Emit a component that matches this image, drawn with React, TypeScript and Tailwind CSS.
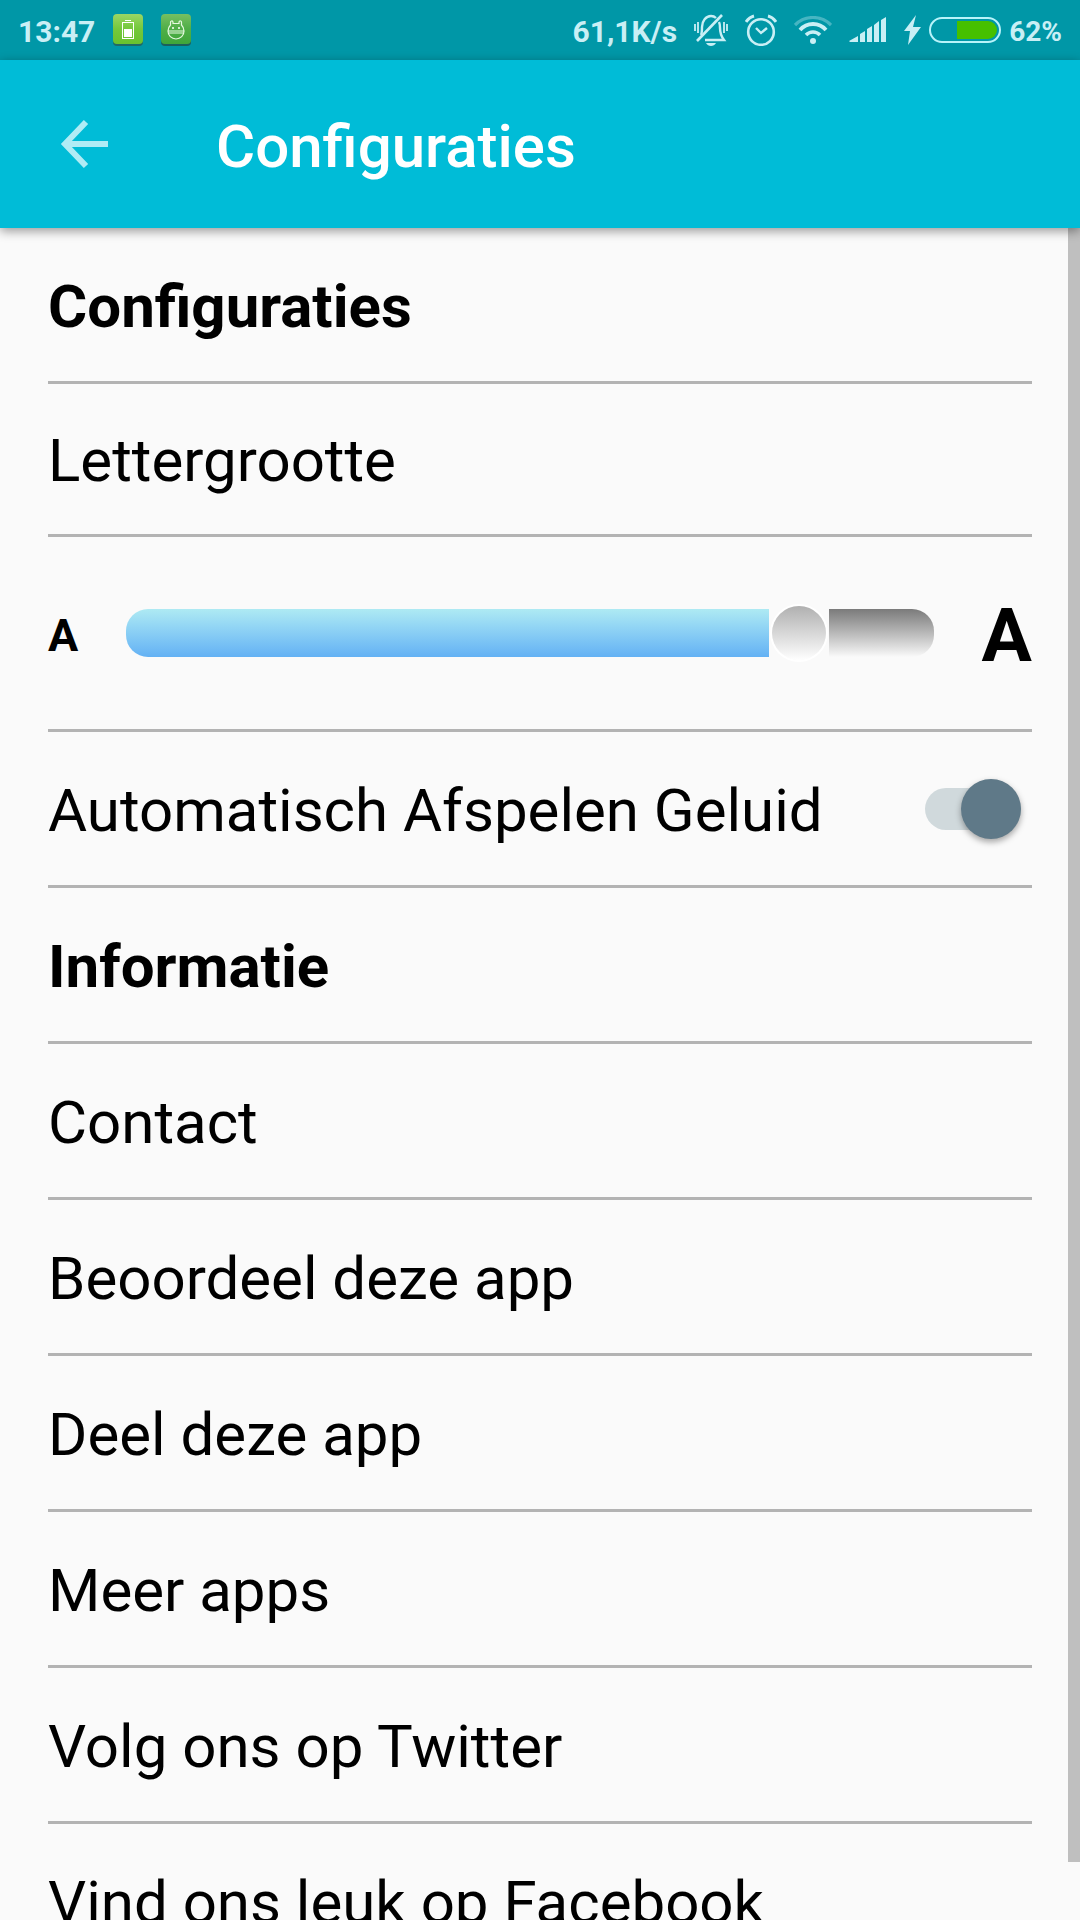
import React, { useState } from "react";

const links = [
  "Contact",
  "Beoordeel deze app",
  "Deel deze app",
  "Meer apps",
  "Volg ons op Twitter",
  "Vind ons leuk op Facebook",
];

const BatteryAppIcon = () => (
  <svg width="30" height="32" viewBox="0 0 30 32" aria-hidden="true">
    <defs>
      <linearGradient id="lime" x1="0" y1="0" x2="0" y2="1">
        <stop offset="0" stopColor="#9ad665" />
        <stop offset="0.5" stopColor="#74c83c" />
        <stop offset="1" stopColor="#68c22f" />
      </linearGradient>
    </defs>
    <rect y="2" width="30" height="30" rx="4" fill="#1f6a66" />
    <rect width="30" height="30" rx="4" fill="url(#lime)" />
    <rect x="9.5" y="8.5" width="11" height="16" fill="none" stroke="#fff" />
    <path d="M12 6.5h6" stroke="#fff" />
    <rect x="11" y="15" width="8" height="8" fill="#fff" />
  </svg>
);

const AndroidAppIcon = () => (
  <svg width="30" height="32" viewBox="0 0 30 32" aria-hidden="true">
    <defs>
      <linearGradient id="green" x1="0" y1="0" x2="0" y2="1">
        <stop offset="0" stopColor="#76bf62" />
        <stop offset="0.5" stopColor="#4fae47" />
        <stop offset="1" stopColor="#3fa63a" />
      </linearGradient>
    </defs>
    <rect y="2" width="30" height="30" rx="4" fill="#1b5f5c" />
    <rect width="30" height="30" rx="4" fill="url(#green)" />
    <path
      d="M12 9.5h6M9.5 11.5v-3a1 1 0 0 1 2.500-.5v2M20.500 11.500v-3a1 1 0 0 0-2.500-.5v2M9.500 11C7.500 13 7 15 7 17c0 4.500 3.500 8 8 8s8-3.500 8-8c0-2-.5-4-2.500-6M7 17h16M8 19h14"
      fill="none"
      stroke="#e6f9e0"
      strokeWidth="1.2"
    />
    <circle cx="12" cy="14" r="1" fill="#fff" />
    <circle cx="18" cy="14" r="1" fill="#fff" />
  </svg>
);

const MutedBellIcon = () => (
  <svg width="34" height="32" viewBox="0 0 34 32" fill="none" stroke="currentColor" aria-hidden="true">
    <path d="M7 21c1-2 1-5 1-8C8 7 12 2 17 2c2 0 4 1 5 2M25 8c1 2 1 4 1 6 0 5 1 8 4 12H11" strokeWidth="2.4" />
    <path d="M28 1L3 27" strokeWidth="2.6" />
    <path d="M1 10v7M4 8v11M30 8v11M33 10v7" strokeWidth="1.8" />
    <path d="M12 29h10c-1 2-3 3-5 3s-4-1-5-3z" fill="currentColor" stroke="none" />
  </svg>
);

const AlarmIcon = () => (
  <svg width="32" height="32" viewBox="0 0 32 32" fill="none" stroke="currentColor" aria-hidden="true">
    <circle cx="16" cy="18" r="12.8" strokeWidth="2.6" />
    <path d="M11 14l5 5 6-5" strokeWidth="2.4" />
    <path d="M1 8C3 5 5 3 9 2M31 8C29 5 27 3 23 2" strokeWidth="3" />
  </svg>
);

const WifiIcon = () => (
  <svg width="38" height="28" viewBox="0 0 38 28" fill="none" stroke="currentColor" aria-hidden="true">
    <path d="M1 9C11-1 27-1 37 9" strokeWidth="3.2" opacity="0.35" />
    <path d="M6 14C13 6 25 6 32 14" strokeWidth="3.8" />
    <path d="M12 19c4-4 10-4 14 0" strokeWidth="3.6" />
    <circle cx="19" cy="25" r="3" fill="currentColor" stroke="none" />
  </svg>
);

const SignalIcon = () => (
  <svg width="38" height="26" viewBox="0 0 38 26" fill="currentColor" aria-hidden="true">
    <path d="M0 24l9-5v6H1zM11 17l5-3v11h-5zM18 12l5-3v16h-5zM25 8l5-4v21h-5zM32 3l5-3v25h-5z" />
  </svg>
);

const BoltIcon = () => (
  <svg width="17" height="30" viewBox="0 0 17 30" fill="currentColor" aria-hidden="true">
    <path d="M12 0L0 16h6L4 30l13-18H9z" />
  </svg>
);

const ChargeIcon = () => (
  <svg width="72" height="26" viewBox="0 0 72 26" aria-hidden="true">
    <rect x="1" y="1" width="70" height="24" rx="12" fill="none" stroke="#b8f3fa" strokeWidth="2" />
    <path d="M28 4h31a9 9 0 0 1 0 18H28z" fill="#46c000" />
  </svg>
);

const StatusBar = () => (
  <div className="flex h-[60px] items-center justify-between bg-[#0097a7] px-[18px] text-[30px] font-bold text-[#c9eff5]">
    <div className="flex items-center gap-[18px]">
      <span className="pt-[3px]">13:47</span>
      <BatteryAppIcon />
      <AndroidAppIcon />
    </div>
    <div className="flex items-center gap-[17px]">
      <span className="pt-[3px]">61,1K/s</span>
      <MutedBellIcon />
      <AlarmIcon />
      <WifiIcon />
      <SignalIcon />
      <div className="flex items-center gap-2">
        <BoltIcon />
        <ChargeIcon />
        <span className="pt-[3px] text-[28px]">62%</span>
      </div>
    </div>
  </div>
);

const AppBar = () => (
  <header className="relative z-10 flex h-[168px] items-center bg-[#00bcd7] text-white shadow-[0_3px_10px_rgba(0,0,0,0.4)]">
    <button type="button" aria-label="Terug" className="ml-[60px] text-[#b0ecf5]">
      <svg width="48" height="54" viewBox="0 0 48 54" fill="none" stroke="currentColor" strokeWidth="6">
        <path d="M26 5L5 27l21 22M5 27h43" />
      </svg>
    </button>
    <h1 className="ml-[108px] pt-[5px] text-[60px] font-medium">Configuraties</h1>
  </header>
);

const FontSizeRow = () => {
  const [size, setSize] = useState(86);

  return (
    <div className="flex h-[195px] items-center gap-12 border-b-[3px] border-[#b3b3b3] font-bold">
      <span className="pt-[5px] text-[45px]">A</span>
      <div className="relative flex flex-1 items-center">
        <div
          className="h-12 rounded-l-[22px] bg-linear-to-b from-[#aeeaf3] to-[#63b1f4]"
          style={{ flexGrow: size }}
        />
        <div className="mx-[3px] size-[54px] rounded-full bg-linear-to-b from-[#b0b0b0] to-white shadow-[0_0_0_2px_#fff]" />
        <div
          className="h-12 rounded-r-[22px] bg-linear-to-b from-[#7b7b7b] to-[#fafafa]"
          style={{ flexGrow: 100 - size }}
        />
        <input
          type="range"
          aria-label="Lettergrootte"
          min={0}
          max={100}
          value={size}
          onChange={(e) => setSize(Number(e.target.value))}
          className="absolute inset-0 h-full w-full cursor-pointer opacity-0"
        />
      </div>
      <span className="pt-[5px] text-[75px]">A</span>
    </div>
  );
};

const AutoPlayRow = () => {
  const [enabled, setEnabled] = useState(true);

  return (
    <label className="flex h-[156px] cursor-pointer items-center justify-between border-b-[3px] border-[#b3b3b3]">
      <span className="pt-[5px]">Automatisch Afspelen Geluid</span>
      <input
        type="checkbox"
        role="switch"
        checked={enabled}
        onChange={(e) => setEnabled(e.target.checked)}
        className="peer sr-only"
      />
      <span className="mr-[11px] flex h-[42px] w-24 items-center justify-start rounded-full bg-[#d0d9dc] peer-checked:justify-end">
        <span className="size-[60px] rounded-full bg-[#5f7988] shadow-[0_3px_6px_rgba(0,0,0,0.35)]" />
      </span>
    </label>
  );
};

export default function App() {
  return (
    <div className="flex h-screen flex-col overflow-hidden bg-[#fafafa] font-[Roboto,sans-serif] text-black">
      <StatusBar />
      <AppBar />
      <div className="flex min-h-0 flex-1">
        <main className="min-w-0 flex-1 overflow-hidden pl-12 pr-9 text-[60px]">
          <h2 className="flex h-[156px] items-center border-b-[3px] border-[#b3b3b3] pt-[5px] font-bold">
            Configuraties
          </h2>
          <h3 className="flex h-[153px] items-center border-b-[3px] border-[#b3b3b3] pt-[3px]">Lettergrootte</h3>
          <FontSizeRow />
          <AutoPlayRow />
          <h2 className="flex h-[156px] items-center border-b-[3px] border-[#b3b3b3] pt-[5px] font-bold">
            Informatie
          </h2>
          <nav>
            {links.map((link) => (
              <a key={link} href="#" className="flex h-[156px] items-center border-b-[3px] border-[#b3b3b3] pt-[5px]">
                {link}
              </a>
            ))}
          </nav>
        </main>
        <div className="mb-[58px] w-3 bg-[#bfbfbf]" />
      </div>
    </div>
  );
}
